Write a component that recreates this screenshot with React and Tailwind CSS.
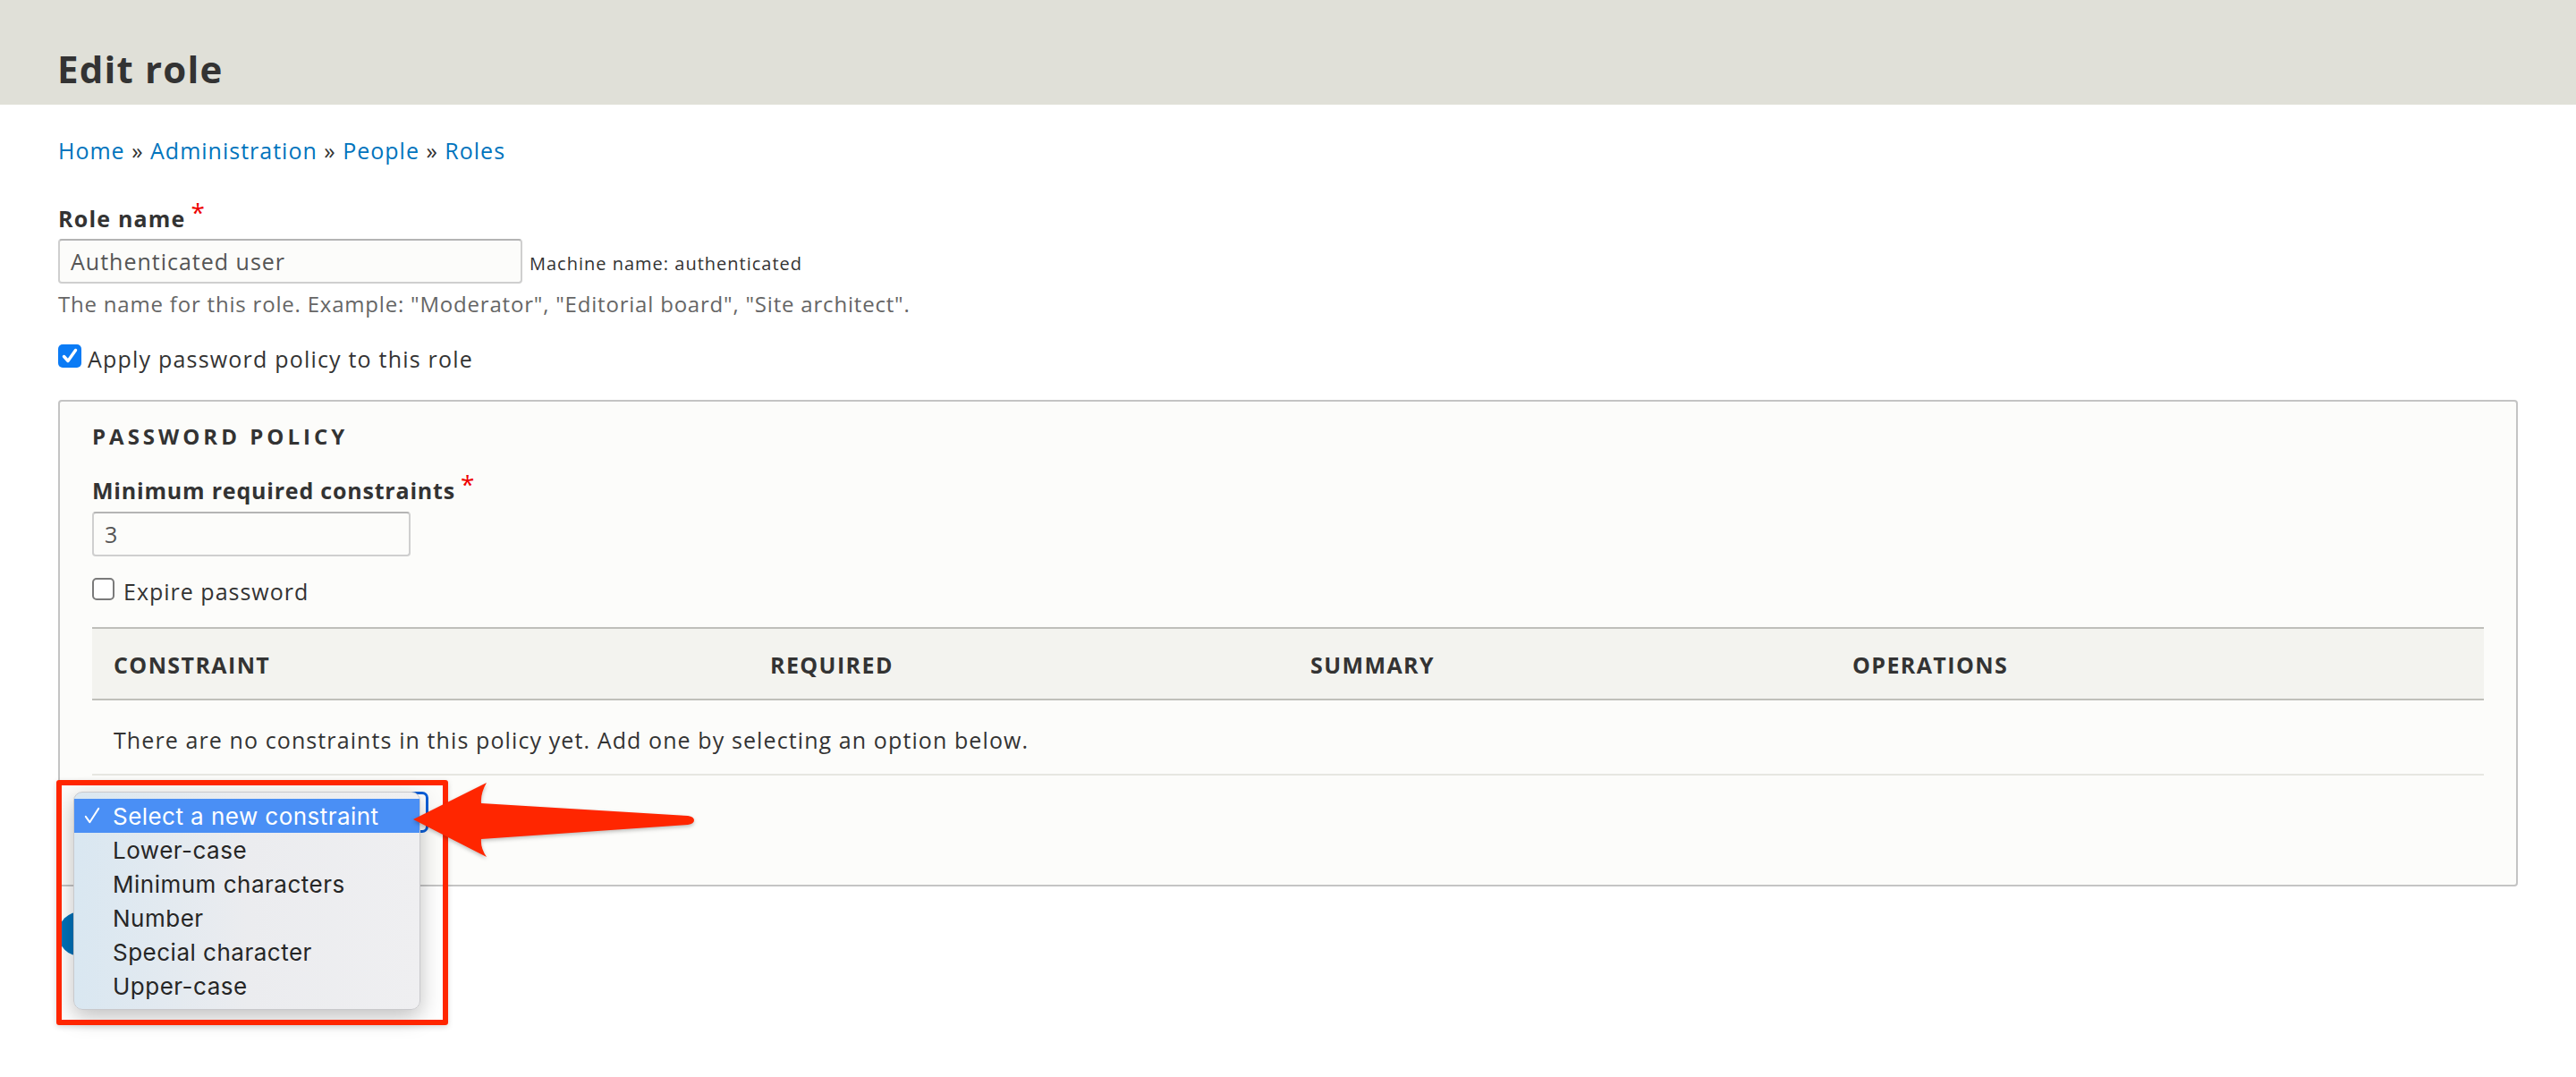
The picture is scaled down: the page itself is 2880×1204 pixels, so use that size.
import React from "react";

function Check() {
  return (
    <svg viewBox="0 0 26 26" className="w-[26px] h-[26px]">
      <path d="M6.5 13.5 L11 18.5 L19.5 6.5" fill="none" stroke="white" strokeWidth="3.4" strokeLinecap="round" strokeLinejoin="round" />
    </svg>
  );
}

const cols = "grid grid-cols-[734px_604px_606px_1fr]";

export default function App() {
  const items = ["Lower-case", "Minimum characters", "Number", "Special character", "Upper-case"];
  return (
    <div className="relative min-h-[1204px] bg-white text-[#333] font-['Open_Sans',sans-serif]">
      <div className="bg-[#e0e0d8] h-[117px] px-[64px] pt-[52px]">
        <h1 className="text-[42px] leading-[50px] font-bold tracking-[1.2px] text-[#333]">Edit role</h1>
      </div>

      <div className="px-[65px]">
        <div className="mt-[33px] text-[25px] leading-[36px] tracking-[1px] text-[#333]">
          <a className="text-[#0074bd]">Home</a> » <a className="text-[#0074bd]">Administration</a> » <a className="text-[#0074bd]">People</a> » <a className="text-[#0074bd]">Roles</a>
        </div>

        <div className="mt-[39px] text-[25px] leading-[36px] font-bold tracking-[1.2px]">
          Role name<span className="text-[#ee0000] text-[28px] font-normal relative -top-[6px] ml-[6px]">*</span>
        </div>
        <div className="mt-[5px] flex items-baseline">
          <div className="w-[519px] h-[50px] border-2 border-[#cfcfcf] border-t-[#b4b4b4] rounded-[4px] bg-[#fcfcfa] px-[12px] text-[25px] leading-[46px] tracking-[1px] text-[#555]">
            Authenticated user
          </div>
          <span className="ml-[8px] text-[20px] tracking-[1px] text-[#333]">Machine name: authenticated</span>
        </div>
        <div className="mt-[7px] text-[24px] leading-[32px] tracking-[0.8px] text-[#666]">
          The name for this role. Example: "Moderator", "Editorial board", "Site architect".
        </div>

        <div className="mt-[27px] flex items-start text-[25px] leading-[36px] tracking-[1.2px]">
          <div className="mt-[2px] w-[26px] h-[26px] rounded-[5px] bg-[#0b7bf5] flex items-center justify-center">
            <Check />
          </div>
          <span className="ml-[7px]">Apply password policy to this role</span>
        </div>

        <div className="mt-[28px] h-[544px] border-2 border-[#c4c4c4] rounded-[4px] bg-[#fcfcfa] px-[36px] pt-[21px]">
          <div className="text-[24px] leading-[36px] font-bold uppercase tracking-[4px]">Password policy</div>
          <div className="mt-[23px] text-[25px] leading-[36px] font-bold tracking-[0.8px]">
            Minimum required constraints<span className="text-[#ee0000] text-[28px] font-normal relative -top-[6px] ml-[6px]">*</span>
          </div>
          <div className="mt-[6px] w-[356px] h-[50px] border-2 border-[#cfcfcf] border-t-[#b4b4b4] rounded-[4px] bg-[#fcfcfa] px-[12px] text-[25px] leading-[46px] text-[#555]">
            3
          </div>
          <div className="mt-[21px] flex items-start text-[25px] leading-[36px] tracking-[1px]">
            <div className="mt-[3px] w-[25px] h-[25px] rounded-[5px] bg-white border-2 border-[#7a7a7a]"></div>
            <span className="ml-[10px]">Expire password</span>
          </div>

          <div className="mt-[22px]">
            <div className={`${cols} h-[82px] items-center pt-[4px] bg-[#f3f3ef] border-y-2 border-[#bfbfba] text-[25px] font-bold uppercase tracking-[1.4px]`}>
              <div className="px-[24px]">Constraint</div>
              <div className="px-[24px]">Required</div>
              <div className="px-[24px]">Summary</div>
              <div className="px-[24px]">Operations</div>
            </div>
            <div className="h-[84px] flex items-center pt-[8px] border-b-2 border-[#e6e6e1] px-[24px] text-[25px] tracking-[1.1px]">
              There are no constraints in this policy yet. Add one by selecting an option below.
            </div>
          </div>

          <div className="mt-[18px] w-[376px] h-[46px] rounded-[7px] border-[3px] border-[#0a5fd8] bg-white px-[12px] text-[24px] leading-[40px]">
            Select a new constraint
          </div>
        </div>

        <div className="mt-[28px] h-[50px] w-[150px] rounded-full bg-[#0071b8] text-white text-[24px] font-bold leading-[50px] text-center">Save</div>
      </div>

      {/* Native popup menu overlay */}
      <div className="absolute left-[82px] top-[885px] w-[388px] h-[244px] rounded-[10px] border border-[#c9c9cc] bg-gradient-to-r from-[#d9e7f1] via-[#ebecef] to-[#efeff1] shadow-[0_8px_24px_rgba(0,0,0,0.25)] pt-[7px] font-['Inter',sans-serif] text-[26px] tracking-[0.5px] text-[#262626]">
        <div className="h-[38px] bg-[#4a8ff5] text-white flex items-center">
          <span className="w-[43px] pl-[11px] flex items-center">
            <svg viewBox="0 0 20 22" className="w-[18px] h-[20px]">
              <path d="M2 12 L7 19 L18 2" fill="none" stroke="white" strokeWidth="2.2" strokeLinecap="round" strokeLinejoin="round" />
            </svg>
          </span>
          <span className="tracking-[0.45px]">Select a new constraint</span>
        </div>
        {items.map((t) => (
          <div key={t} className="h-[38px] flex items-center pl-[43px]">{t}</div>
        ))}
      </div>

      {/* Red annotation box */}
      <div className="absolute left-[63px] top-[872px] w-[438px] h-[274px] border-[6px] border-[#ff2600] rounded-[3px] shadow-[0_2px_6px_rgba(0,0,0,0.15)]"></div>

      {/* Red annotation arrow */}
      <svg className="absolute left-[455px] top-[868px] w-[330px] h-[100px] drop-shadow-[0_2px_2px_rgba(0,0,0,0.25)]" viewBox="0 0 330 100">
        <path d="M7 48 L89 7 Q82 19 83 30 L314 44 Q321 45 321 49 Q321 53 314 54 L83 70 Q82 80 89 90 Z" fill="#ff2600" />
      </svg>
    </div>
  );
}
